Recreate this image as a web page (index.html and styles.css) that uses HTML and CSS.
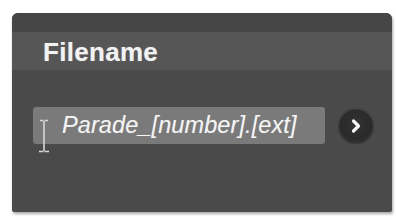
FILE: index.html
```html
<!DOCTYPE html>
<html>
<head>
<meta charset="utf-8">
<link rel="stylesheet" href="styles.css">
</head>
<body>
<div class="panel">
  <div class="topband"></div>
  <div class="header"><span class="title">Filename</span></div>
  <div class="content">
    <div class="row">
      <div class="field">
        <span class="value">Parade_[number].[ext]</span>
        <svg class="ibeam" width="12" height="34" viewBox="0 0 12 34">
          <path d="M2 1.5h3.5M6.5 1.5H10M6 2v30M1 32.5h4.5M6.5 32.5H11" stroke="#d8d8d8" stroke-width="1.6" fill="none"/>
        </svg>
      </div>
      <div class="go">
        <svg width="16" height="16" viewBox="0 0 16 16">
          <path d="M5.5 3L10.5 8L5.5 13" stroke="#f4f4f4" stroke-width="3.2" fill="none" stroke-linecap="round" stroke-linejoin="round"/>
        </svg>
      </div>
    </div>
  </div>
</div>
</body>
</html>
```

FILE: styles.css
```css
html, body {
  margin: 0;
  padding: 0;
  background: #ffffff;
}
body {
  width: 396px;
  height: 220px;
  overflow: hidden;
}
.panel {
  margin: 13px 0 0 12px;
  width: 380px;
  height: 199px;
  background: #4a4a4a;
  border-radius: 6px 6px 2px 2px;
  box-shadow: 1px 2px 3px rgba(0,0,0,0.35);
  display: flex;
  flex-direction: column;
  overflow: hidden;
}
.topband {
  height: 19px;
  background: #464646;
}
.header {
  height: 38px;
  background: #565656;
  display: flex;
  align-items: center;
  padding-left: 31px;
  padding-top: 2px;
  box-sizing: border-box;
}
.title {
  font-family: "Liberation Sans", Arial, sans-serif;
  font-weight: bold;
  font-size: 26px;
  color: #f2f2f2;
  text-shadow: 0 0 1px rgba(255,255,255,0.4);
  letter-spacing: 0.3px;
}
.content {
  flex: 1;
  padding: 37px 0 0 21px;
}
.row {
  display: flex;
  align-items: center;
  gap: 13px;
}
.field {
  position: relative;
  width: 292px;
  height: 37px;
  background: #7a7a7a;
  border-radius: 3px;
  display: flex;
  align-items: center;
  padding-left: 29px;
  box-sizing: border-box;
}
.value {
  font-family: "Liberation Sans", Arial, sans-serif;
  font-style: italic;
  font-size: 23.5px;
  color: #f4f4f4;
  text-shadow: 0 0 1px rgba(255,255,255,0.3);
  letter-spacing: 0.1px;
}
.ibeam {
  position: absolute;
  left: 5px;
  top: 12px;
}
.go {
  width: 36px;
  height: 36px;
  border-radius: 50%;
  background: radial-gradient(circle at 50% 45%, #333333 0%, #2a2a2a 55%, #444444 100%);
  box-shadow: inset 0 1px 2px rgba(255,255,255,0.18), 0 0 1px rgba(0,0,0,0.4);
  display: flex;
  align-items: center;
  justify-content: center;
}
```
